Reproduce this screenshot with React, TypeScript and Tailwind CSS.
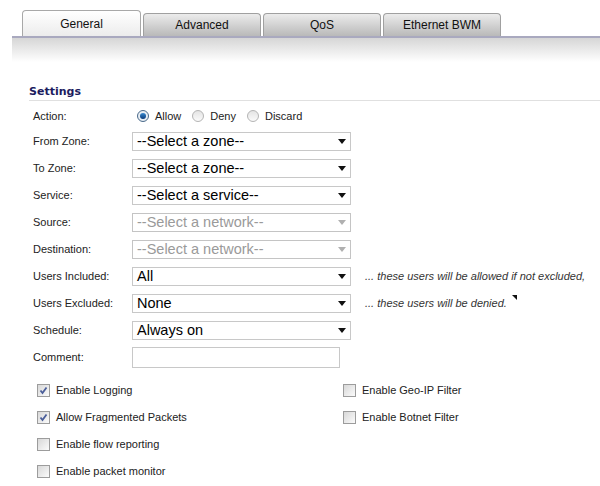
import React from "react";

const tabs = ["General", "Advanced", "QoS", "Ethernet BWM"];

function Arrow({ disabled }: { disabled?: boolean }) {
  return (
    <svg width="8" height="5" viewBox="0 0 8 5" className="shrink-0">
      <path d="M0 0 H8 L4 5 Z" fill={disabled ? "#b0b0b0" : "#111"} />
    </svg>
  );
}

function Select({ value, disabled }: { value: string; disabled?: boolean }) {
  return (
    <div
      className={`w-[219px] h-[19px] flex items-center justify-between pl-[4px] pr-[4px] bg-white border ${
        disabled ? "border-[#c4c4c4] text-[#9a9a9a]" : "border-[#c8c8c8] text-black"
      } text-[14.5px] leading-none font-['Liberation_Sans',Arial,sans-serif]`}
    >
      <span>{value}</span>
      <Arrow disabled={disabled} />
    </div>
  );
}

function Radio({ checked, label }: { checked?: boolean; label: string }) {
  return (
    <div className="flex items-center gap-[6px] mr-[11px]">
      <span
        className={`w-[12px] h-[12px] rounded-full border flex items-center justify-center ${
          checked ? "border-[#4a6a8a] bg-[#e8eef4]" : "border-[#b4b4b4] bg-gradient-to-b from-[#e4e4e4] to-[#fafafa]"
        }`}
      >
        {checked && <span className="w-[6px] h-[6px] rounded-full bg-gradient-to-b from-[#3a8ad0] to-[#0a3a7a]" />}
      </span>
      <span>{label}</span>
    </div>
  );
}

function Check({ checked, label }: { checked?: boolean; label: string }) {
  return (
    <div className="h-[27px] flex items-center gap-[6px]">
      <span className="w-[13px] h-[13px] border border-[#9c9c9c] bg-gradient-to-br from-[#d8d8d8] to-[#fbfbfb] flex items-center justify-center">
        {checked && (
          <svg width="9" height="9" viewBox="0 0 9 9">
            <path d="M1.5 4.5 L3.5 7 L7.5 1.5" stroke="#4a5e9a" strokeWidth="1.8" fill="none" />
          </svg>
        )}
      </span>
      <span>{label}</span>
    </div>
  );
}

function Row({ label, children }: { label: string; children: React.ReactNode }) {
  return (
    <div className="h-[27px] flex items-center">
      <div className="w-[99px] shrink-0">{label}</div>
      {children}
    </div>
  );
}

export default function App() {
  return (
    <div className="w-[600px] h-[486px] bg-white overflow-hidden font-['Liberation_Sans',Tahoma,sans-serif] text-[11px] text-[#222]">
      {/* tab strip */}
      <div className="h-[36px] flex items-end pl-[22px] gap-[2px]">
        {tabs.map((t, i) =>
          i === 0 ? (
            <div
              key={t}
              className="w-[119px] h-[26px] rounded-t-[4px] border border-b-0 border-[#a8a8a8] bg-gradient-to-b from-white to-[#ececec] flex items-center justify-center text-[12px] text-[#111] font-['Liberation_Sans',Arial,sans-serif]"
            >
              {t}
            </div>
          ) : (
            <div
              key={t}
              className="w-[118px] h-[23px] rounded-t-[4px] border border-b-0 border-[#a0a0a0] bg-gradient-to-b from-[#ececec] to-[#b9b9b9] flex items-center justify-center text-[12px] text-[#111] font-['Liberation_Sans',Arial,sans-serif]"
            >
              {t}
            </div>
          )
        )}
      </div>
      <div className="ml-[12px] border-t-2 border-[#a9a9bf] h-[26px] bg-gradient-to-b from-[#d6d6d6] to-white" />

      <div className="pl-[29px] pt-[23px]">
        <div className="text-[11px] font-bold text-[#1c1c5e] font-['DejaVu_Sans',Verdana,sans-serif] pb-[1px] border-b border-[#e0e0e0] leading-[14px]">
          Settings
        </div>
        <div className="pl-[4px] pt-[3px]">
          <div className="h-[24px] flex items-center">
            <div className="w-[99px] shrink-0">Action:</div>
            <div className="flex items-center pl-[5px]">
              <Radio checked label="Allow" />
              <Radio label="Deny" />
              <Radio label="Discard" />
            </div>
          </div>
          <Row label="From Zone:">
            <Select value="--Select a zone--" />
          </Row>
          <Row label="To Zone:">
            <Select value="--Select a zone--" />
          </Row>
          <Row label="Service:">
            <Select value="--Select a service--" />
          </Row>
          <Row label="Source:">
            <Select value="--Select a network--" disabled />
          </Row>
          <Row label="Destination:">
            <Select value="--Select a network--" disabled />
          </Row>
          <Row label="Users Included:">
            <Select value="All" />
            <span className="ml-[14px] italic text-[#333]">... these users will be allowed if not excluded,</span>
          </Row>
          <Row label="Users Excluded:">
            <Select value="None" />
            <span className="ml-[14px] italic text-[#333]">... these users will be denied.</span>
            <svg width="5" height="5" viewBox="0 0 5 5" className="ml-[5px] -mt-[12px]">
              <path d="M0 0 H5 V5 Z" fill="#111" />
            </svg>
          </Row>
          <Row label="Schedule:">
            <Select value="Always on" />
          </Row>
          <Row label="Comment:">
            <div className="w-[208px] h-[21px] border border-[#c8c8c8] bg-white" />
          </Row>

          <div className="flex pt-[6px] pl-[4px]">
            <div className="w-[306px]">
              <Check checked label="Enable Logging" />
              <Check checked label="Allow Fragmented Packets" />
              <Check label="Enable flow reporting" />
              <Check label="Enable packet monitor" />
            </div>
            <div>
              <Check label="Enable Geo-IP Filter" />
              <Check label="Enable Botnet Filter" />
            </div>
          </div>
        </div>
      </div>
    </div>
  );
}
